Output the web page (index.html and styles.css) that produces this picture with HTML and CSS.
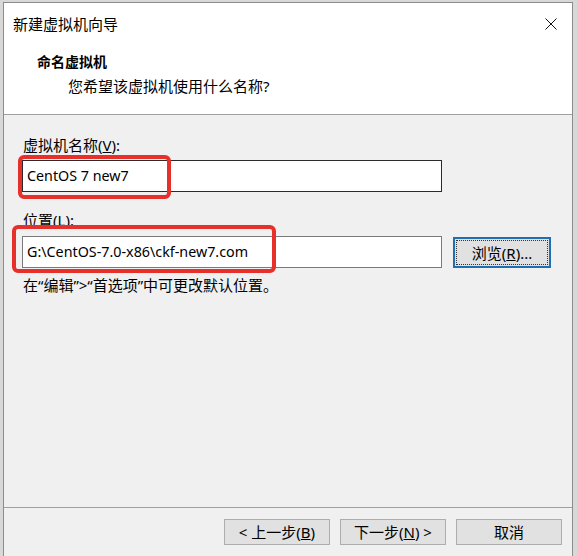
FILE: index.html
```html
<!DOCTYPE html>
<html lang="zh-CN">
<head>
<meta charset="utf-8">
<title>新建虚拟机向导</title>
<link rel="stylesheet" href="styles.css">
</head>
<body>
<div class="window">
  <div class="titlebar">
    <span class="title">新建虚拟机向导</span>
    <svg class="close" width="12" height="12" viewBox="0 0 12 12"><path d="M0.5 0.5 L11.5 11.5 M11.5 0.5 L0.5 11.5" stroke="#111" stroke-width="1"/></svg>
  </div>
  <div class="header">
    <div class="h-title">命名虚拟机</div>
    <div class="h-sub">您希望该虚拟机使用什么名称?</div>
  </div>
  <div class="body">
    <div class="label">虚拟机名称(<u>V</u>):</div>
    <div class="input dark">CentOS 7 new7</div>
    <div class="label label2">位置(<u>L</u>):</div>
    <div class="row">
      <div class="input">G:\CentOS-7.0-x86\ckf-new7.com</div>
      <div class="btn browse"><span class="focus">浏览(<u>R</u>)...</span></div>
    </div>
    <div class="note">在“编辑”&gt;“首选项”中可更改默认位置。</div>
  </div>
  <div class="footer">
    <div class="btn">&lt; 上一步(<u>B</u>)</div>
    <div class="btn">下一步(<u>N</u>) &gt;</div>
    <div class="btn">取消</div>
  </div>
  <div class="mark mark1"></div>
  <div class="mark mark2"></div>
</div>
</body>
</html>
```
FILE: styles.css
```css
html, body {
  margin: 0;
  padding: 0;
}
body {
  background: #d8d8d8;
  font-family: "Noto Sans", "Noto Sans CJK SC", sans-serif;
  font-size: 15px;
  color: #000;
  overflow: hidden;
  height: 556px;
}
.window {
  position: relative;
  margin: 2px 0 0 3px;
  width: 570px;
  height: 560px;
  box-sizing: border-box;
  border: 1px solid #8c8c8c;
  border-bottom: none;
  background: #f0f0f0;
  display: flex;
  flex-direction: column;
}
.titlebar {
  height: 42px;
  background: #fff;
  display: flex;
  align-items: center;
  justify-content: space-between;
  padding: 0 15px 0 9px;
  flex: none;
}
.title {
  line-height: 20px;
}
.close {
  display: block;
}
.header {
  height: 62px;
  background: #fff;
  border-bottom: 1px solid #a0a0a0;
  padding: 7px 0 0 33px;
  flex: none;
}
.h-title {
  font-weight: bold;
  font-size: 14px;
  line-height: 20px;
}
.h-sub {
  margin-top: 4px;
  padding-left: 31px;
  line-height: 20px;
}
.body {
  height: 392px;
  flex: none;
  padding: 20px 0 0 18px;
  box-sizing: border-box;
}
.label {
  line-height: 20px;
  padding-left: 1px;
}
.label2 {
  margin-top: 18px;
}
.input {
  margin-top: 5px;
  width: 420px;
  height: 32px;
  box-sizing: border-box;
  background: #fff;
  border: 1px solid #7a7a7a;
  padding-left: 4px;
  font-size: 14.3px;
  line-height: 30px;
  white-space: nowrap;
}
.input.dark {
  border-color: #2b2b2b;
}
.row {
  display: flex;
  align-items: flex-start;
  gap: 11px;
  margin-top: 6px;
}
.row .input {
  margin-top: 0;
}
.btn {
  width: 106px;
  height: 26px;
  box-sizing: border-box;
  background: #e1e1e1;
  border: 1px solid #adadad;
  display: flex;
  align-items: center;
  justify-content: center;
  line-height: 20px;
}
.browse {
  width: 98px;
  height: 31px;
  margin-top: 1px;
  border: 2px solid #1f6fb2;
  padding: 1px;
}
.focus {
  flex: 1;
  align-self: stretch;
  display: flex;
  align-items: center;
  justify-content: center;
  outline: 1px dotted #333;
  outline-offset: -1px;
}
.note {
  margin-top: 7px;
  line-height: 20px;
  padding-left: 1px;
}
.footer {
  border-top: 1px solid #a0a0a0;
  padding: 11px 10px 0 0;
  display: flex;
  justify-content: flex-end;
  gap: 10px;
}
.mark {
  position: absolute;
  border: 4px solid #e8302a;
  border-radius: 6px;
  box-sizing: border-box;
}
.mark1 {
  left: 14px;
  top: 152px;
  width: 153px;
  height: 44px;
}
.mark2 {
  left: 8px;
  top: 222px;
  width: 264px;
  height: 48px;
}
```
